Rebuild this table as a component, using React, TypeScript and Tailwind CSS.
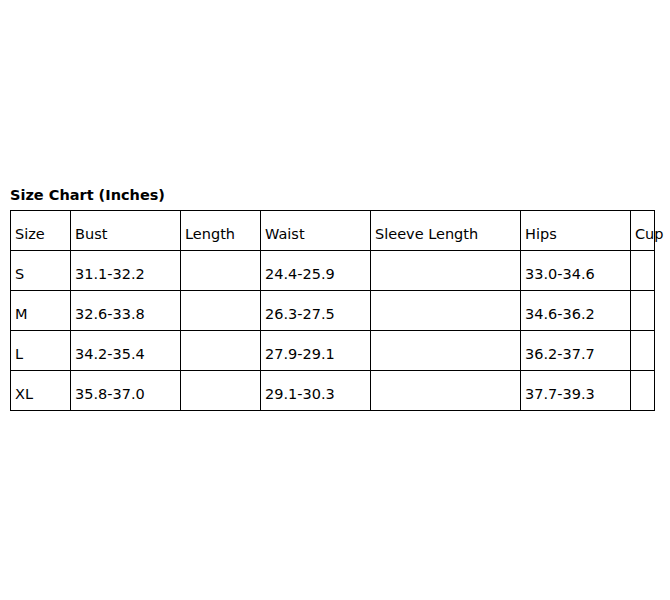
import React from 'react';

const columns = [
  { label: 'Size', width: 60 },
  { label: 'Bust', width: 110 },
  { label: 'Length', width: 80 },
  { label: 'Waist', width: 110 },
  { label: 'Sleeve Length', width: 150 },
  { label: 'Hips', width: 110 },
  { label: 'Cup', width: 24 },
];

const rows = [
  ['S', '31.1-32.2', '', '24.4-25.9', '', '33.0-34.6', ''],
  ['M', '32.6-33.8', '', '26.3-27.5', '', '34.6-36.2', ''],
  ['L', '34.2-35.4', '', '27.9-29.1', '', '36.2-37.7', ''],
  ['XL', '35.8-37.0', '', '29.1-30.3', '', '37.7-39.3', ''],
];

export default function App() {
  return (
    <div className="w-[670px] h-[600px] bg-white text-black font-['DejaVu_Sans',Verdana,sans-serif]">
      <div className="pt-[185px] pl-[10px]">
        <h2 className="text-[14.5px] font-bold leading-[20px] mb-[5px]">Size Chart (Inches)</h2>
        <table className="table-fixed border-collapse w-[645px] text-[14.5px]">
          <colgroup>
            {columns.map((c) => (
              <col key={c.label} style={{ width: c.width }} />
            ))}
          </colgroup>
          <tbody>
            <tr className="h-[40px]">
              {columns.map((c) => (
                <td key={c.label} className="border border-black pl-[4px] pt-[9px] whitespace-nowrap overflow-visible">
                  {c.label}
                </td>
              ))}
            </tr>
            {rows.map((r) => (
              <tr key={r[0]} className="h-[40px]">
                {r.map((cell, i) => (
                  <td key={i} className="border border-black pl-[4px] pt-[9px] whitespace-nowrap">
                    {cell}
                  </td>
                ))}
              </tr>
            ))}
          </tbody>
        </table>
      </div>
    </div>
  );
}
